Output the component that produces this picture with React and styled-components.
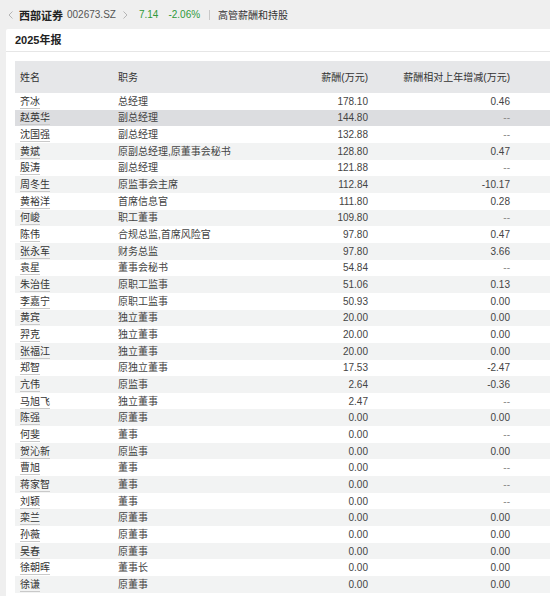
import React from "react";
import styled, { createGlobalStyle } from "styled-components";

const GlobalStyle = createGlobalStyle`
  html, body {
    margin: 0;
    padding: 0;
    background: #efefef;
    font-family: "Liberation Sans", "Noto Sans CJK SC", sans-serif;
    color: #333;
  }
`;

const rows = [
  ["齐冰", "总经理", "178.10", "0.46"],
  ["赵英华", "副总经理", "144.80", "--"],
  ["沈国强", "副总经理", "132.88", "--"],
  ["黄斌", "原副总经理,原董事会秘书", "128.80", "0.47"],
  ["殷涛", "副总经理", "121.88", "--"],
  ["周冬生", "原监事会主席", "112.84", "-10.17"],
  ["黄裕洋", "首席信息官", "111.80", "0.28"],
  ["何峻", "职工董事", "109.80", "--"],
  ["陈伟", "合规总监,首席风险官", "97.80", "0.47"],
  ["张永军", "财务总监", "97.80", "3.66"],
  ["袁星", "董事会秘书", "54.84", "--"],
  ["朱治佳", "原职工监事", "51.06", "0.13"],
  ["李嘉宁", "原职工监事", "50.93", "0.00"],
  ["黄宾", "独立董事", "20.00", "0.00"],
  ["羿克", "独立董事", "20.00", "0.00"],
  ["张福江", "独立董事", "20.00", "0.00"],
  ["郑智", "原独立董事", "17.53", "-2.47"],
  ["亢伟", "原监事", "2.64", "-0.36"],
  ["马旭飞", "独立董事", "2.47", "--"],
  ["陈强", "原董事", "0.00", "0.00"],
  ["何斐", "董事", "0.00", "--"],
  ["贺沁新", "原监事", "0.00", "0.00"],
  ["曹旭", "董事", "0.00", "--"],
  ["蒋家智", "董事", "0.00", "--"],
  ["刘颖", "董事", "0.00", "--"],
  ["栾兰", "原董事", "0.00", "0.00"],
  ["孙薇", "原董事", "0.00", "0.00"],
  ["吴春", "原董事", "0.00", "0.00"],
  ["徐朝晖", "董事长", "0.00", "0.00"],
  ["徐谦", "原董事", "0.00", "0.00"],
];

function App() {
  return (
    <>
      <GlobalStyle />
      <Page>
        <TopBar>
          <Chevron viewBox="0 0 5 8">
            <path d="M4.5 0.5 L1 4 L4.5 7.5" />
          </Chevron>
          <StockName>西部证券</StockName>
          <Code>002673.SZ</Code>
          <Chevron viewBox="0 0 5 8" $right>
            <path d="M0.5 0.5 L4 4 L0.5 7.5" />
          </Chevron>
          <Quote>7.14</Quote>
          <Quote $gap={10}>-2.06%</Quote>
          <Divider />
          <PageTitle>高管薪酬和持股</PageTitle>
        </TopBar>
        <Panel>
          <PanelTitle>2025年报</PanelTitle>
          <Table>
            <HeadRow>
              <Cell>姓名</Cell>
              <Cell>职务</Cell>
              <Cell $right>薪酬(万元)</Cell>
              <Cell $right>薪酬相对上年增减(万元)</Cell>
              <Cell />
            </HeadRow>
            {rows.map((r, i) => (
              <Row key={r[0]} $striped={i % 2 === 1} $hover={i === 1}>
                <Cell>
                  <Name>{r[0]}</Name>
                </Cell>
                <Cell>{r[1]}</Cell>
                <Cell $right>{r[2]}</Cell>
                <Cell $right $dim={r[3] === "--"}>
                  {r[3]}
                </Cell>
                <Cell />
              </Row>
            ))}
          </Table>
        </Panel>
      </Page>
    </>
  );
}

const Page = styled.div`
  width: 550px;
  height: 596px;
  overflow: hidden;
  background: #efefef;
`;

const TopBar = styled.div`
  height: 29px;
  display: flex;
  align-items: center;
  padding-left: 8px;
  box-sizing: border-box;
`;

const Chevron = styled.svg`
  width: 5px;
  height: 8px;
  margin-right: ${(p) => (p.$right ? "11px" : "6px")};
  margin-left: ${(p) => (p.$right ? "7px" : "0")};
  fill: none;
  stroke: #b5b5b5;
  stroke-width: 1;
`;

const StockName = styled.span`
  font-size: 11px;
  font-weight: bold;
  color: #222;
`;

const Code = styled.span`
  font-size: 10px;
  color: #555;
  margin-left: 4px;
`;

const Quote = styled.span`
  font-size: 10px;
  color: #2f9a3a;
  margin-left: ${(p) => (p.$gap ? `${p.$gap}px` : "0")};
`;

const Divider = styled.span`
  width: 1px;
  height: 10px;
  background: #c8c8c8;
  margin: 0 8px 0 9px;
`;

const PageTitle = styled.span`
  font-size: 10px;
  color: #333;
`;

const Panel = styled.div`
  margin-left: 6px;
  background: #fff;
  border-top-left-radius: 2px;
  height: 567px;
`;

const PanelTitle = styled.div`
  height: 22px;
  line-height: 22px;
  padding-left: 9px;
  font-size: 11px;
  font-weight: bold;
  color: #222;
  border-bottom: 1px solid #e6e6e6;
`;

const Table = styled.div`
  margin: 9px 0 0 9px;
`;

const cols = "98px 150px 110px 142px 1fr";

const HeadRow = styled.div`
  display: grid;
  grid-template-columns: ${cols};
  align-items: center;
  height: 32px;
  background: #e6e7e9;
  font-size: 10px;
  color: #333;
`;

const Row = styled.div`
  display: grid;
  grid-template-columns: ${cols};
  align-items: center;
  height: 16.67px;
  font-size: 10px;
  color: #444;
  background: ${(p) => (p.$hover ? "#dcdde0" : p.$striped ? "#f2f3f3" : "#fff")};
`;

const Cell = styled.div`
  padding: 0 5px;
  line-height: 13px;
  white-space: nowrap;
  text-align: ${(p) => (p.$right ? "right" : "left")};
  color: ${(p) => (p.$dim ? "#888" : "inherit")};
`;

const Name = styled.span`
  color: #333;
  text-decoration: underline;
  text-decoration-color: #c9c9c9;
  text-underline-offset: 3px;
`;

export default App;
